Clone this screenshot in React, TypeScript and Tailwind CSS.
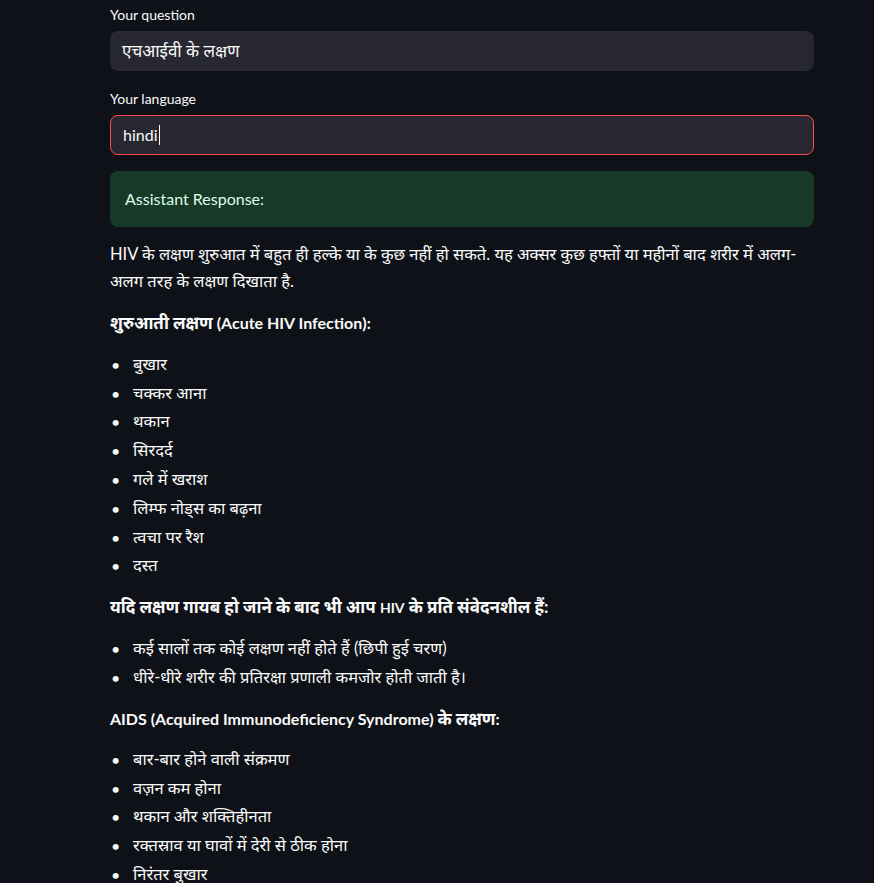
const early = [
  "बुखार",
  "चक्कर आना",
  "थकान",
  "सिरदर्द",
  "गले में खराश",
  "लिम्फ नोड्स का बढ़ना",
  "त्वचा पर रैश",
  "दस्त",
];

const latent = [
  "कई सालों तक कोई लक्षण नहीं होते हैं (छिपी हुई चरण)",
  "धीरे-धीरे शरीर की प्रतिरक्षा प्रणाली कमजोर होती जाती है।",
];

const aids = [
  "बार-बार होने वाली संक्रमण",
  "वज़न कम होना",
  "थकान और शक्तिहीनता",
  "रक्तस्राव या घावों में देरी से ठीक होना",
  "निरंतर बुखार",
];

function Bullets({ items }: { items: string[] }) {
  return (
    <ul className="mb-[13px] flex flex-col">
      {items.map((t) => (
        <li key={t} className="flex h-[28.8px] items-center">
          <span className="w-[23px] pl-[1px] text-[16px]">•</span>
          <span className="text-[16.5px]">{t}</span>
        </li>
      ))}
    </ul>
  );
}

export default function App() {
  return (
    <div
      className="min-h-[883px] overflow-hidden bg-[#0e1117] text-[#fafafa]"
      style={{ fontFamily: 'Lato, "Noto Sans", sans-serif' }}
    >
      <div className="ml-[110px] w-[704px] pt-[5px]">
        {/* Your question */}
        <label className="mb-[6px] block text-[14px] leading-[20px]">Your question</label>
        <div className="flex h-[40px] items-center rounded-lg bg-[#262730] px-[12px] text-[17px]">
          एचआईवी के लक्षण
        </div>

        {/* Your language */}
        <label className="mb-[6px] mt-[18px] block text-[14px] leading-[20px]">Your language</label>
        <div className="flex h-[40px] items-center rounded-lg border border-[#ff4b4b] bg-[#262730] px-[12px] text-[16px]">
          hindi
          <span className="ml-[1px] inline-block h-[20px] w-[1px] bg-[#fafafa]" />
        </div>

        {/* Assistant response box */}
        <div className="mt-[16px] flex h-[56px] items-center rounded-lg bg-[#173928] px-[15px] text-[16px] text-[#dffde9]">
          Assistant Response:
        </div>

        <div className="mt-[14px] text-[16px] leading-[27px]">
          <p className="mb-[14px] max-w-[696px] text-[16.5px]">
            HIV के लक्षण शुरुआत में बहुत ही हल्के या के कुछ नहीं हो सकते. यह अक्सर कुछ हफ्तों या महीनों बाद शरीर में अलग-अलग तरह के लक्षण दिखाता है.
          </p>
          <p className="mb-[14px] font-bold">
            <span className="text-[17px]">शुरुआती लक्षण</span> (Acute HIV Infection):
          </p>
          <Bullets items={early} />
          <p className="mb-[13px] font-bold text-[17px]">
            यदि लक्षण गायब हो जाने के बाद भी आप <span className="text-[14px]">HIV</span> के प्रति संवेदनशील हैं:
          </p>
          <Bullets items={latent} />
          <p className="mb-[13px] font-bold">
            AIDS (Acquired Immunodeficiency Syndrome) <span className="text-[17px]">के लक्षण</span>:
          </p>
          <Bullets items={aids} />
        </div>
      </div>
    </div>
  );
}
